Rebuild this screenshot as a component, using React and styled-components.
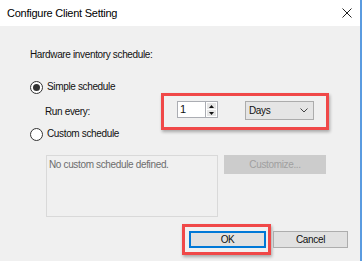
import React from "react";
import styled, { createGlobalStyle } from "styled-components";

const Global = createGlobalStyle`
  html, body {
    margin: 0;
    padding: 0;
    background: #f0f0f0;
  }
  body {
    font-family: "Liberation Sans", Arial, sans-serif;
    color: #111;
  }
`;

const Window = styled.div`
  width: 362px;
  height: 261px;
  box-sizing: border-box;
  border-right: 2px solid #5a9be0;
  display: flex;
  flex-direction: column;
  overflow: hidden;
`;

const TitleBar = styled.div`
  height: 26px;
  flex: none;
  background: #fff;
  display: flex;
  align-items: center;
  justify-content: space-between;
  padding: 0 8px 0 7px;
  font-size: 11px;
  letter-spacing: -0.25px;
  color: #000;
`;

const Body = styled.div`
  flex: 1;
  background: #f0f0f0;
  padding: 22px 0 0 30px;
  display: flex;
  flex-direction: column;
  font-size: 10px;
  letter-spacing: -0.35px;
`;

const Heading = styled.div`
  line-height: 14px;
  height: 14px;
`;

const RadioRow = styled.label`
  display: flex;
  align-items: center;
  gap: 4px;
  height: 14px;
  line-height: 14px;
  margin-top: ${(p) => p.$top}px;
`;

const Radio = styled.span`
  width: 13px;
  height: 13px;
  box-sizing: border-box;
  border-radius: 50%;
  border: 1px solid #333;
  background: #fff;
  display: flex;
  align-items: center;
  justify-content: center;

  &::after {
    content: "";
    width: 7px;
    height: 7px;
    border-radius: 50%;
    background: ${(p) => (p.$checked ? "#333" : "transparent")};
  }
`;

const RunRow = styled.div`
  display: flex;
  align-items: center;
  height: 21px;
  margin-top: 7px;
  padding-left: 15px;
`;

const RunLabel = styled.span`
  width: 116px;
`;

const Highlight = styled.div`
  display: flex;
  align-items: flex-start;
  border: 3px solid #f04848;
  box-shadow: 1px 2px 3px rgba(0, 0, 0, 0.3);
  padding: ${(p) => p.$pad};
  gap: ${(p) => p.$gap || 0}px;
`;

const Spin = styled.div`
  display: flex;
  height: 17px;
`;

const SpinInput = styled.div`
  width: 28px;
  box-sizing: border-box;
  background: #fff;
  border: 1px solid #abadb3;
  border-right: none;
  padding-left: 2px;
  font-size: 11px;
  line-height: 15px;
`;

const SpinButtons = styled.div`
  width: 13px;
  box-sizing: border-box;
  border: 1px solid #abadb3;
  background: #fff;
  display: flex;
  flex-direction: column;
  gap: 1px;
  padding: 1px;
`;

const SpinBtn = styled.div`
  flex: 1;
  background: #e6e6e6;
  display: flex;
  align-items: center;
  justify-content: center;
`;

const Combo = styled.div`
  width: 69px;
  height: 19px;
  box-sizing: border-box;
  background: #e5e5e5;
  border: 1px solid #acacac;
  display: flex;
  align-items: center;
  justify-content: space-between;
  padding: 0 5px 0 3px;
  font-size: 10px;
`;

const CustomArea = styled.div`
  display: flex;
  align-items: flex-start;
  gap: 6px;
  margin-top: 14px;
  padding-left: 16px;
`;

const ScheduleBox = styled.div`
  width: 172px;
  height: 62px;
  box-sizing: border-box;
  border: 1px solid #d9d9d9;
  padding: 3px 2px;
  color: #6d6d6d;
  line-height: 12px;
`;

const Button = styled.div`
  width: ${(p) => p.$w}px;
  height: ${(p) => p.$h || 17}px;
  box-sizing: border-box;
  display: flex;
  align-items: center;
  justify-content: center;
  background: ${(p) => (p.$disabled ? "#cccccc" : "#e1e1e1")};
  color: ${(p) => (p.$disabled ? "#a0a0a0" : "#111")};
  border: ${(p) =>
    p.$focus ? "2px solid #0078d7" : p.$disabled ? "1px solid #cccccc" : "1px solid #adadad"};
  font-size: 10px;
`;

const ButtonRow = styled.div`
  display: flex;
  align-items: center;
  justify-content: flex-end;
  height: 17px;
  margin-top: 14px;
  padding-right: 12px;
  gap: 2px;
`;

const CloseIcon = () => (
  <svg width="10" height="10" viewBox="0 0 10 10">
    <path d="M0.5 0.5 L9.5 9.5 M9.5 0.5 L0.5 9.5" stroke="#222" strokeWidth="1" fill="none" />
  </svg>
);

const Chevron = () => (
  <svg width="8" height="5" viewBox="0 0 8 5">
    <path d="M0.5 0.5 L4 4 L7.5 0.5" stroke="#444" strokeWidth="1" fill="none" />
  </svg>
);

const Arrow = ({ up }) => (
  <svg width="5" height="3" viewBox="0 0 5 3">
    <path d={up ? "M0 3 L2.5 0 L5 3 Z" : "M0 0 L2.5 3 L5 0 Z"} fill="#111" />
  </svg>
);

export default function App() {
  return (
    <>
      <Global />
      <Window>
        <TitleBar>
          <span>Configure Client Setting</span>
          <CloseIcon />
        </TitleBar>
        <Body>
          <Heading>Hardware inventory schedule:</Heading>
          <RadioRow $top={18}>
            <Radio $checked />
            Simple schedule
          </RadioRow>
          <RunRow>
            <RunLabel>Run every:</RunLabel>
            <Highlight $pad="5px 12px 7px 13px" $gap={27}>
              <Spin>
                <SpinInput>1</SpinInput>
                <SpinButtons>
                  <SpinBtn>
                    <Arrow up />
                  </SpinBtn>
                  <SpinBtn>
                    <Arrow />
                  </SpinBtn>
                </SpinButtons>
              </Spin>
              <Combo>
                Days
                <Chevron />
              </Combo>
            </Highlight>
          </RunRow>
          <RadioRow $top={5}>
            <Radio />
            Custom schedule
          </RadioRow>
          <CustomArea>
            <ScheduleBox>No custom schedule defined.</ScheduleBox>
            <Button $w={102} $h={19} $disabled>
              Customize...
            </Button>
          </CustomArea>
          <ButtonRow>
            <Highlight $pad="4px 2px 4px 4px">
              <Button $w={77} $focus>
                OK
              </Button>
            </Highlight>
            <Button $w={75}>Cancel</Button>
          </ButtonRow>
        </Body>
      </Window>
    </>
  );
}
